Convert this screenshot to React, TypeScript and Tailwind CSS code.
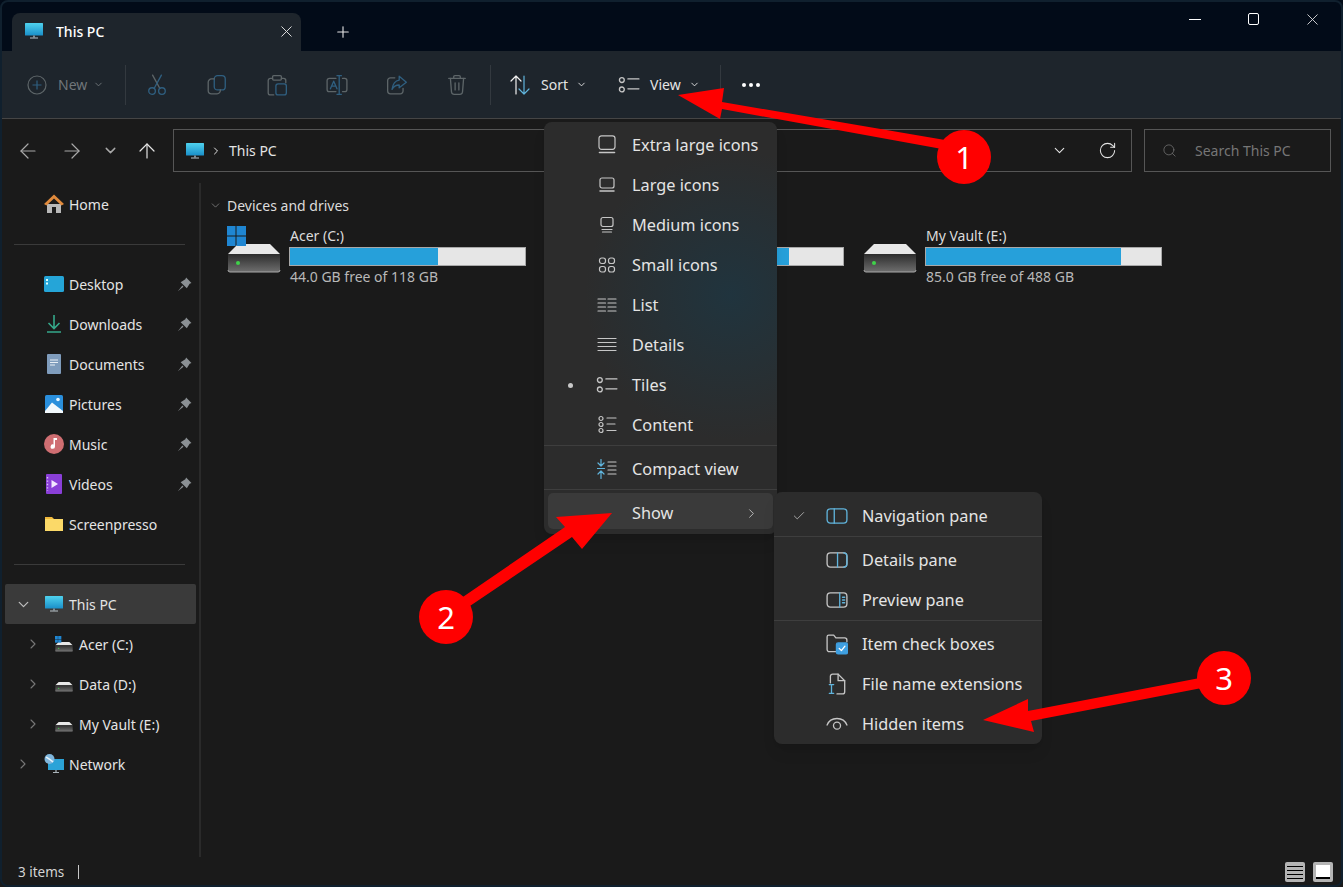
import { ArrowLeft, ArrowRight, ArrowUp, Check, ChevronDown, ChevronRight, Plus, RotateCw, Search, X } from 'lucide-react'

const DIM = '#5d6568'
const DIMBLUE = '#2f5f80'
const LINE = '#c6c6c6'
const BLUE = '#60b4dc'

function Monitor({ size = 20 }: { size?: number }) {
    return (
        <svg width={size} height={size} viewBox="0 0 20 20">
            <defs>
                <linearGradient id="mon" x1="0" y1="0" x2="0" y2="1">
                    <stop offset="0" stopColor="#4fd2ee" />
                    <stop offset="1" stopColor="#1a8fc9" />
                </linearGradient>
            </defs>
            <rect x="1" y="2" width="18" height="12.5" rx="0.5" fill="url(#mon)" />
            <rect x="9" y="14.5" width="2" height="2" fill="#7d8a92" />
            <rect x="6" y="16.5" width="8" height="1" fill="#b8c2c8" />
        </svg>
    )
}

function Drive({ w = 54, windows = false }: { w?: number; windows?: boolean }) {
    return (
        <svg width={w} height={(w * 47) / 54} viewBox="0 0 54 47">
            <defs>
                <linearGradient id="drv" x1="0" y1="0" x2="0" y2="1">
                    <stop offset="0" stopColor="#2c2c2c" />
                    <stop offset="1" stopColor="#6e6e6e" />
                </linearGradient>
            </defs>
            <g transform="translate(0 2)">
                <path d="M1 26 L11 16 H43 L53 26 Z" fill="#e8e8e8" />
                <path d="M1 26 H53 V42 a2 2 0 0 1 -2 2 H3 a2 2 0 0 1 -2 -2 Z" fill="url(#drv)" />
                <path d="M1 42 a2 2 0 0 0 2 2 H51 a2 2 0 0 0 2 -2" fill="none" stroke="#a8a8a8" />
                <circle cx="11" cy="35" r="2" fill="#3fd24a" />
            </g>
            {windows && (
                <g fill="#1f86d2">
                    <rect x="-1" y="0" width="9.5" height="9.5" />
                    <rect x="9.5" y="0" width="9.5" height="9.5" />
                    <rect x="-1" y="10.5" width="9.5" height="9.5" />
                    <rect x="9.5" y="10.5" width="9.5" height="9.5" />
                </g>
            )}
        </svg>
    )
}

function Glyph({ children, size = 20, color = LINE }: { children: React.ReactNode; size?: number; color?: string }) {
    return (
        <svg width={size} height={size} viewBox="0 0 20 20" fill="none" stroke={color} strokeWidth="1.2" strokeLinecap="round" strokeLinejoin="round">
            {children}
        </svg>
    )
}

const toolIcons = [
    <Glyph size={22} color={DIM}>
        <path d="M6 1 L12.5 13" />
        <path d="M14 1 L7.5 13" stroke={DIMBLUE} />
        <circle cx="5.5" cy="15.5" r="3" stroke={DIMBLUE} />
        <circle cx="14.5" cy="15.5" r="3" stroke={DIMBLUE} />
    </Glyph>,
    <Glyph size={22} color={DIM}>
        <rect x="7.5" y="1.5" width="10" height="13" rx="3" stroke={DIMBLUE} />
        <path d="M7.5 4.5 H5 a3 3 0 0 0 -3 3 V15 a3 3 0 0 0 3 3 H10 a3 3 0 0 0 3 -3.5" />
    </Glyph>,
    <Glyph size={22} color={DIM}>
        <path d="M6 4 H4 a2 2 0 0 0 -2 2 V17 a2 2 0 0 0 2 2 H7" />
        <path d="M14 4 H16 a2 2 0 0 1 2 2 V8" />
        <rect x="6" y="1.5" width="8" height="4" rx="1" />
        <rect x="9" y="9" width="9.5" height="10" rx="2" stroke={DIMBLUE} />
    </Glyph>,
    <Glyph size={22} color={DIM}>
        <path d="M9 4 H3 a2 2 0 0 0 -2 2 V14 a2 2 0 0 0 2 2 H9" />
        <path d="M15 4 H17 a2 2 0 0 1 2 2 V14 a2 2 0 0 1 -2 2 H15" />
        <path d="M4 13.5 L7 6.5 L10 13.5 M5 11 H9" stroke={DIMBLUE} />
        <path d="M10 1.5 H14 M12 1.5 V18.5 M10 18.5 H14" stroke={DIMBLUE} />
    </Glyph>,
    <Glyph size={22} color={DIM}>
        <path d="M8 3.5 H4 a2.5 2.5 0 0 0 -2.5 2.5 V15.5 a2.5 2.5 0 0 0 2.5 2.5 H13 a2.5 2.5 0 0 0 2.5 -2.5 V13" />
        <path d="M12 2 L18.5 7.5 L12 12.5 V10 C9 10 7 11 5.5 14 C6 10 8 6 12 5.5 Z" stroke={DIMBLUE} />
    </Glyph>,
    <Glyph size={22} color={DIM}>
        <path d="M2.5 4 H17.5 M7 4 V2.5 a1 1 0 0 1 1 -1 H12 a1 1 0 0 1 1 1 V4" />
        <path d="M4 4 L5 16.5 a2.5 2.5 0 0 0 2.5 2 H12.5 a2.5 2.5 0 0 0 2.5 -2 L16 4" />
        <path d="M8.3 8 V14.5 M11.7 8 V14.5" />
    </Glyph>,
]

function TilesIcon({ color = LINE }: { color?: string }) {
    return (
        <Glyph size={22} color={color}>
            <circle cx="3.5" cy="5.5" r="2.2" />
            <circle cx="3.5" cy="14" r="2.2" />
            <path d="M9 4.5 H19 M9 13.5 H19" />
        </Glyph>
    )
}

const viewItems = [
    {
        label: 'Extra large icons',
        icon: (
            <Glyph>
                <rect x="2" y="0.8" width="16" height="13.5" rx="2.5" />
                <path d="M2.5 17.5 H17.5" strokeWidth="1.6" />
            </Glyph>
        ),
    },
    {
        label: 'Large icons',
        icon: (
            <Glyph>
                <rect x="3" y="3" width="14" height="10" rx="2" />
                <path d="M3 16 H17" strokeWidth="1.5" />
            </Glyph>
        ),
    },
    {
        label: 'Medium icons',
        icon: (
            <Glyph>
                <rect x="4" y="2.5" width="12" height="9" rx="2" />
                <path d="M5 14.5 H15 M5.5 17 H14.5" />
            </Glyph>
        ),
    },
    {
        label: 'Small icons',
        icon: (
            <Glyph>
                <rect x="2.5" y="3" width="6" height="5.5" rx="2.2" />
                <rect x="11.5" y="3" width="6" height="5.5" rx="2.2" />
                <rect x="2.5" y="11.5" width="6" height="5.5" rx="2.2" />
                <rect x="11.5" y="11.5" width="6" height="5.5" rx="2.2" />
            </Glyph>
        ),
    },
    {
        label: 'List',
        icon: (
            <Glyph>
                <path d="M1 4 H8.5 M1 8 H8.5 M1 12 H8.5 M1 16 H8.5 M11 4 H19 M11 8 H19 M11 12 H19 M11 16 H19" />
            </Glyph>
        ),
    },
    {
        label: 'Details',
        icon: (
            <Glyph>
                <path d="M1 3.5 H19 M1 7.5 H19 M1 11.5 H19 M1 15.5 H19" />
            </Glyph>
        ),
    },
    { label: 'Tiles', marker: true, icon: <TilesIcon /> },
    {
        label: 'Content',
        icon: (
            <Glyph>
                <circle cx="4" cy="3.5" r="2" />
                <circle cx="4" cy="9.5" r="2" />
                <circle cx="4" cy="15.5" r="2" />
                <path d="M10 3 H19 M10 9 H18 M10 15.5 H19" />
            </Glyph>
        ),
    },
]

const showItems = [
    {
        group: [
            {
                label: 'Navigation pane',
                check: true,
                icon: (
                    <Glyph size={22} color={BLUE}>
                        <rect x="1" y="3.5" width="18" height="13" rx="3" />
                        <path d="M7.5 3.5 V16.5" />
                    </Glyph>
                ),
            },
        ],
    },
    {
        group: [
            {
                label: 'Details pane',
                icon: (
                    <Glyph size={22}>
                        <rect x="1" y="3.5" width="18" height="13" rx="3" />
                        <path d="M10.5 3.5 V16.5" stroke={BLUE} />
                        <path d="M16 3.5 a3 3 0 0 1 3 3 V13.5 a3 3 0 0 1 -3 3" stroke={BLUE} />
                    </Glyph>
                ),
            },
            {
                label: 'Preview pane',
                icon: (
                    <Glyph size={22}>
                        <rect x="1" y="3.5" width="18" height="13" rx="3" />
                        <path d="M12.5 3.5 V16.5 M15 7.5 H17 M15 10 H17 M15 12.5 H17" stroke={BLUE} />
                    </Glyph>
                ),
            },
        ],
    },
    {
        group: [
            {
                label: 'Item check boxes',
                icon: (
                    <Glyph size={22}>
                        <path d="M9 17 H3 a2 2 0 0 1 -2 -2 V3.5 a1.5 1.5 0 0 1 1.5 -1.5 H7 L9 4.5 H17 a2 2 0 0 1 2 2 V8" />
                        <rect x="9.5" y="9" width="10" height="10" rx="1.5" fill="#3f9fe0" stroke="#3f9fe0" />
                        <path d="M12 14 L14 16 L17.2 12" stroke="#fff" />
                    </Glyph>
                ),
            },
            {
                label: 'File name extensions',
                icon: (
                    <Glyph size={22}>
                        <path d="M4 9 V3 a2 2 0 0 1 2 -2 H11 L17 7 V17 a2 2 0 0 1 -2 2 H10" />
                        <path d="M11 1 V7 H17" />
                        <path d="M3 10.5 H7 M5 10.5 V18.5 M3 18.5 H7" stroke={BLUE} />
                    </Glyph>
                ),
            },
            {
                label: 'Hidden items',
                icon: (
                    <Glyph size={22}>
                        <path d="M1 11 C4 3 16 3 19 11" />
                        <circle cx="10" cy="11.5" r="3.2" />
                    </Glyph>
                ),
            },
        ],
    },
]

const pinned = [
    {
        label: 'Desktop',
        icon: (
            <svg width="20" height="20" viewBox="0 0 20 20">
                <rect x="0" y="2" width="20" height="16" rx="1.5" fill="#25a5d8" />
                <rect x="2" y="5" width="2" height="2" fill="#dff" />
                <rect x="2" y="8.5" width="2" height="2" fill="#dff" />
            </svg>
        ),
    },
    {
        label: 'Downloads',
        icon: (
            <svg width="20" height="20" viewBox="0 0 20 20" fill="none" stroke="#35a88a" strokeWidth="1.6">
                <path d="M10 1 V14 M4.5 9 L10 14.5 L15.5 9 M3 18 H17" />
            </svg>
        ),
    },
    {
        label: 'Documents',
        icon: (
            <svg width="20" height="20" viewBox="0 0 20 20">
                <rect x="3" y="0" width="14" height="20" rx="1" fill="#7f9cbc" />
                <path d="M6 6 H14 M6 8.5 H14 M6 11 H11" stroke="#e8eef4" strokeWidth="1" />
            </svg>
        ),
    },
    {
        label: 'Pictures',
        icon: (
            <svg width="20" height="20" viewBox="0 0 20 20">
                <rect x="1" y="1" width="18" height="18" rx="1.5" fill="#2a8fdc" />
                <circle cx="14" cy="5.5" r="1.8" fill="#e8f6ff" />
                <path d="M1 17 L8 8.5 L19 17 V19 H1 Z" fill="#f2f8fc" />
            </svg>
        ),
    },
    {
        label: 'Music',
        icon: (
            <svg width="20" height="20" viewBox="0 0 20 20">
                <circle cx="10" cy="10" r="10" fill="#cf6e72" />
                <path d="M9.5 4 H13 V6 H11 V12.5 a2.2 2.2 0 1 1 -1.5 -2 Z" fill="#fff" />
            </svg>
        ),
    },
    {
        label: 'Videos',
        icon: (
            <svg width="20" height="20" viewBox="0 0 20 20">
                <rect x="2" y="0" width="16" height="20" rx="1" fill="#8a3fd8" />
                <path d="M7.5 6 L14 10 L7.5 14 Z" fill="#f2e8ff" />
                <path d="M3.5 3 V17" stroke="#d8c0f4" strokeWidth="1.4" strokeDasharray="1.4 2" />
            </svg>
        ),
    },
    {
        label: 'Screenpresso',
        icon: (
            <svg width="20" height="20" viewBox="0 0 20 20">
                <path d="M1 3 H8 L10 5 H1 Z" fill="#f0b83c" />
                <rect x="1" y="5" width="18" height="12" fill="#fbd968" />
            </svg>
        ),
    },
]

function Pin() {
    return (
        <svg width="15" height="15" viewBox="0 0 14 14" fill="#8b9094">
            <path d="M8.5 0.5 L13.5 5.5 L11.8 6.2 L9.2 10.6 L3.4 4.8 L7.8 2.2 Z" />
            <path d="M5 8 L0.8 13.2 L6 9 Z" />
        </svg>
    )
}

function SmallDrive({ windows = false }: { windows?: boolean }) {
    return (
        <div className="flex w-[20px] justify-center">
            <Drive w={18} windows={windows} />
        </div>
    )
}

function DriveTile({ name, free, used, windows }: { name?: string; free?: string; used: number; windows?: boolean }) {
    return (
        <div className="flex w-[318px]">
            <div className="w-[62px] pt-[1px]">
                <Drive windows={windows} />
            </div>
            <div className="w-[237px] pt-[2px]">
                <div className="h-[18px] pl-[1px] text-[14px] leading-[18px] text-[#dcdcdc]">{name}</div>
                <div className="mt-[2px] h-[19px] border border-[#a8a8a8] bg-[#e6e6e6]">
                    <div className="h-full bg-[#26a0da]" style={{ width: `${used}%` }} />
                </div>
                {free && <div className="mt-[2px] pl-[1px] text-[14px] leading-[18px] text-[#b8b8b8]">{free}</div>}
            </div>
        </div>
    )
}

function Annotations() {
    return (
        <svg className="pointer-events-none absolute inset-0" width="1343" height="887" viewBox="0 0 1343 887">
            <g fill="#ff0000">
                <path d="M678 95 L724 88 L722 102 L945 140 L942 149 L722 109 L720 119 Z" />
                <path d="M612 513 L556 517 L565 527 L457 601 L464 610 L572 537 L582 549 Z" />
                <path d="M983 720 L1028 699 L1028 711 L1205 677 L1207 687 L1031 721 L1034 732 Z" />
                <circle cx="964" cy="157" r="27" />
                <circle cx="446" cy="617" r="27" />
                <circle cx="1224" cy="678" r="27" />
            </g>
        </svg>
    )
}

function Bubble({ className, n }: { className: string; n: number }) {
    return (
        <div className={`absolute flex h-[54px] w-[54px] items-center justify-center font-['Liberation_Sans',sans-serif] text-[31px] font-normal text-white ${className}`}>
            {n}
        </div>
    )
}

export default function App() {
    return (
        <div className="relative flex h-[887px] w-[1343px] flex-col overflow-hidden bg-[#1a1a1a] font-['Noto_Sans',sans-serif] text-[14px] text-[#e4e4e4]">
            {/* title bar */}
            <div className="flex h-[51px] shrink-0 bg-[#020b18] pl-[12px] pt-[13px]">
                <div className="flex h-[38px] w-[289px] items-center rounded-t-[8px] bg-[#1e252c] pb-[2px] pl-[12px] pr-[7px]">
                    <Monitor />
                    <span className="ml-[12px] flex-1 text-[14px] font-medium text-white">This PC</span>
                    <X size={19} strokeWidth={1.2} className="mr-[-2px]" />
                </div>
                <div className="flex h-[38px] w-[84px] items-center justify-center">
                    <Plus size={18} strokeWidth={1.5} />
                </div>
                <div className="ml-auto mt-[-13px] flex h-[38px] pr-[2px]">
                    <div className="flex w-[58px] items-center justify-center">
                        <div className="h-[1px] w-[12px] bg-white" />
                    </div>
                    <div className="flex w-[58px] items-center justify-center">
                        <div className="h-[12px] w-[11px] rounded-[2px] border border-white" />
                    </div>
                    <div className="flex w-[59px] items-center justify-center">
                        <X size={19} strokeWidth={1.1} className="ml-[1px]" />
                    </div>
                </div>
            </div>

            {/* command bar */}
            <div className="flex h-[68px] shrink-0 items-center border-b border-[#454545] bg-[#1e252c] pl-[27px]">
                <div className="flex w-[98px] items-center text-[#70767a]">
                    <svg width="20" height="20" viewBox="0 0 20 20" fill="none" stroke="#5d6568" strokeWidth="1.2">
                        <circle cx="10" cy="10" r="9" />
                        <path d="M10 5.5 V14.5 M5.5 10 H14.5" stroke={DIMBLUE} />
                    </svg>
                    <span className="ml-[11px]">New</span>
                    <ChevronDown size={11} className="ml-[6px]" />
                </div>
                <div className="h-[40px] w-[1px] bg-[#33393f]" />
                <div className="ml-[1px] flex">
                    {toolIcons.map((icon, i) => (
                        <div key={i} className="flex w-[60px] justify-center">
                            {icon}
                        </div>
                    ))}
                </div>
                <div className="ml-[3px] h-[40px] w-[1px] bg-[#33393f]" />
                <div className="ml-[19px] flex w-[87px] items-center">
                    <Glyph size={20} color="#f0f0f0">
                        <path d="M6 19 V1 M1 6 L6 1 L11 6" />
                        <path d="M14 1 V19 M9 14 L14 19 L19 14" stroke={BLUE} />
                    </Glyph>
                    <span className="ml-[11px]">Sort</span>
                    <ChevronDown size={11} className="ml-[8px]" />
                </div>
                <div className="ml-[21px] flex w-[102px] items-center">
                    <TilesIcon />
                    <span className="ml-[10px]">View</span>
                    <ChevronDown size={11} className="ml-[8px]" />
                </div>
                <div className="h-[40px] w-[1px] bg-[#33393f]" />
                <div className="ml-[21px] flex gap-[3px]">
                    <div className="h-[4px] w-[4px] rounded-full bg-white" />
                    <div className="h-[4px] w-[4px] rounded-full bg-white" />
                    <div className="h-[4px] w-[4px] rounded-full bg-white" />
                </div>
            </div>

            {/* address row */}
            <div className="flex h-[64px] shrink-0 items-start pl-[6px] pt-[10px]">
                <div className="flex h-[43px] w-[161px] items-center">
                    <div className="flex w-[44px] justify-center"><ArrowLeft size={24} strokeWidth={1.2} color="#a8a8a8" /></div>
                    <div className="flex w-[43px] justify-center"><ArrowRight size={24} strokeWidth={1.2} color="#a8a8a8" /></div>
                    <div className="flex w-[34px] justify-center"><ChevronDown size={17} color="#a8a8a8" /></div>
                    <div className="flex w-[40px] justify-center"><ArrowUp size={24} strokeWidth={1.2} /></div>
                </div>
                <div className="ml-[6px] flex h-[43px] w-[959px] items-center border border-[#565656] pl-[11px]">
                    <Monitor />
                    <ChevronRight size={12} strokeWidth={2} className="ml-[5px]" />
                    <span className="ml-[7px]">This PC</span>
                    <ChevronDown size={17} strokeWidth={1.5} className="ml-auto mr-[30px]" />
                    <RotateCw size={19} strokeWidth={1.3} className="mr-[14px]" />
                </div>
                <div className="ml-[12px] flex h-[43px] w-[187px] items-center border border-[#565656] pl-[17px] text-[#767676]">
                    <Search size={15} strokeWidth={1.2} />
                    <span className="ml-[18px]">Search This PC</span>
                </div>
            </div>

            {/* body */}
            <div className="flex min-h-0 flex-1">
                <div className="w-[199px] shrink-0 pt-[1px]">
                    <Row label="Home" icon={
                        <svg width="20" height="20" viewBox="0 0 20 20">
                            <path d="M3 10 H17 V19 H12 V13 H8 V19 H3 Z" fill="#b8b8b8" />
                            <path d="M10 0.5 L20 10 L17.5 11.5 L10 4.5 L2.5 11.5 L0 10 Z" fill="#e08a3c" />
                        </svg>
                    } />
                    <Sep />
                    {pinned.map((p, i) => (
                        <Row key={p.label} label={p.label} icon={p.icon} pin={i < 6} />
                    ))}
                    <Sep />
                    <div className="ml-[5px] flex h-10 w-[191px] items-center rounded-[2px] bg-[#3a3a3a] pl-[10px]">
                        <ChevronDown size={17} strokeWidth={1.8} color="#bdbdbd" />
                        <div className="ml-[12px]"><Monitor /></div>
                        <span className="ml-[5px]">This PC</span>
                    </div>
                    {[
                        { label: 'Acer (C:)', windows: true },
                        { label: 'Data (D:)', windows: false },
                        { label: 'My Vault (E:)', windows: false },
                    ].map((d) => (
                        <div key={d.label} className="flex h-10 items-center pl-[25px]">
                            <ChevronRight size={16} strokeWidth={1.6} color="#777" />
                            <div className="ml-[13px]"><SmallDrive windows={d.windows} /></div>
                            <span className="ml-[5px]">{d.label}</span>
                        </div>
                    ))}
                    <div className="flex h-10 items-center pl-[15px]">
                        <ChevronRight size={16} strokeWidth={1.6} color="#777" />
                        <svg className="ml-[13px]" width="20" height="20" viewBox="0 0 20 20">
                            <rect x="4" y="5" width="16" height="11" fill="#2ba3d8" />
                            <path d="M12 16 V18 M9 18.5 H15" stroke="#aab4ba" strokeWidth="1.2" />
                            <circle cx="5.5" cy="5" r="5" fill="#7fb6dc" />
                            <path d="M2 3 C5 5 7 6 9 8" stroke="#e8f4fc" strokeWidth="1.5" fill="none" />
                        </svg>
                        <span className="ml-[5px]">Network</span>
                    </div>
                </div>
                <div className="w-[2px] shrink-0 bg-[#2a2a2a]" />
                <div className="flex-1 pl-[10px] pt-[12px]">
                    <div className="flex h-[20px] items-center text-[#dcdcdc]">
                        <ChevronDown size={13} strokeWidth={1.2} color="#9a9a9a" className="ml-[-2px]" />
                        <span className="ml-[5px]">Devices and drives</span>
                    </div>
                    <div className="ml-[16px] mt-[10px] flex">
                        <DriveTile name="Acer (C:)" free="44.0 GB free of 118 GB" used={63} windows />
                        <DriveTile used={77} />
                        <DriveTile name="My Vault (E:)" free="85.0 GB free of 488 GB" used={83} />
                    </div>
                </div>
            </div>

            {/* status bar */}
            <div className="flex h-[30px] shrink-0 items-center pl-[18px] pr-[10px] text-[13.5px] text-[#d4d4d4]">
                <span>3 items</span>
                <div className="ml-[14px] h-[14px] w-[1px] bg-[#c8c8c8]" />
                <div className="ml-auto flex h-[20px] w-[20px] flex-col justify-center gap-[3px] rounded-[2px] bg-[#b4b4b4] px-[2px]">
                    <div className="h-[1px] bg-black" />
                    <div className="h-[1px] bg-black" />
                    <div className="h-[1px] bg-black" />
                    <div className="h-[1px] bg-black" />
                </div>
                <div className="ml-[8px] h-[20px] w-[20px] rounded-[2px] bg-[#b4b4b4] p-[3px]">
                    <div className="h-full border-b-2 border-black bg-white" />
                </div>
            </div>

            {/* view menu */}
            <div className="absolute left-[544px] top-[122px] w-[233px] rounded-[8px] bg-[radial-gradient(circle_at_80%_42%,#20343e_0%,#2c2c2c_48%)] pb-[5px] pt-[3px] text-[16.3px] shadow-lg">
                {viewItems.map((item) => (
                    <div key={item.label} className="flex h-10 items-center">
                        <div className="flex w-[52px] justify-center">
                            {item.marker && <div className="h-[5px] w-[5px] rounded-full bg-[#c8c8c8]" />}
                        </div>
                        <div className="flex w-[22px] justify-center">{item.icon}</div>
                        <span className="ml-[14px]">{item.label}</span>
                    </div>
                ))}
                <div className="h-[4px] border-t border-[#3e3e3e]" />
                <div className="flex h-10 items-center">
                    <div className="w-[52px]" />
                    <div className="flex w-[22px] justify-center">
                        <Glyph>
                            <path d="M4 0.5 V7 M1 4 L4 7 L7 4" stroke={BLUE} />
                            <path d="M0.5 9.5 H7.5" stroke={BLUE} />
                            <path d="M4 19.5 V12 M1 15 L4 12 L7 15" stroke={BLUE} />
                            <path d="M11 3 H19 M11 7 H19 M11 11 H19 M11 15 H19" />
                        </Glyph>
                    </div>
                    <span className="ml-[14px]">Compact view</span>
                </div>
                <div className="h-[4px] border-t border-[#3e3e3e]" />
                <div className="mx-[4px] flex h-[36px] items-center rounded-[5px] bg-[#3a3a3a] pt-[4px]">
                    <span className="ml-[84px]">Show</span>
                    <ChevronRight size={15} strokeWidth={1.4} className="ml-auto mr-[14px]" color="#c8c8c8" />
                </div>
            </div>

            {/* show submenu */}
            <div className="absolute left-[774px] top-[492px] w-[268px] rounded-[8px] bg-[#2c2c2c] pt-[4px] text-[16.3px] shadow-lg">
                {showItems.map((section, i) => (
                    <div key={i}>
                        {i > 0 && <div className="h-[4px] border-t border-[#3e3e3e]" />}
                        {section.group.map((item) => (
                            <div key={item.label} className="flex h-10 items-center">
                                <div className="flex w-[50px] justify-center">
                                    {'check' in item && <Check size={14} strokeWidth={1.3} color="#c8c8c8" />}
                                </div>
                                <div className="flex w-[26px] justify-center">{item.icon}</div>
                                <span className="ml-[12px]">{item.label}</span>
                            </div>
                        ))}
                    </div>
                ))}
            </div>

            <Annotations />
            <Bubble className="left-[937px] top-[130px]" n={1} />
            <Bubble className="left-[419px] top-[590px]" n={2} />
            <Bubble className="left-[1197px] top-[651px]" n={3} />

            <div className="pointer-events-none absolute inset-0 rounded-[8px] border-2 border-[#10202e]" />
        </div>
    )
}

function Row({ label, icon, pin }: { label: string; icon: React.ReactNode; pin?: boolean }) {
    return (
        <div className="flex h-10 items-center pl-[44px] pr-[7px]">
            <div className="flex w-[20px] justify-center">{icon}</div>
            <span className="ml-[5px]">{label}</span>
            {pin && <div className="ml-auto"><Pin /></div>}
        </div>
    )
}

function Sep() {
    return (
        <div className="flex h-10 items-center px-[14px]">
            <div className="h-[1px] w-full bg-[#3a3a3a]" />
        </div>
    )
}
